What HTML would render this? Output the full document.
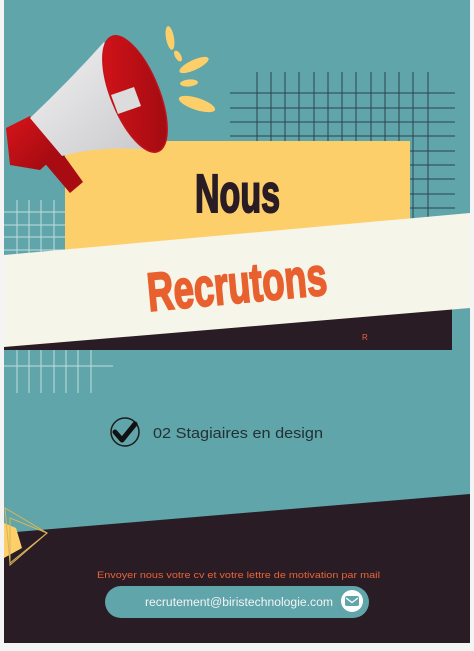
<!DOCTYPE html>
<html><head><meta charset="utf-8"><style>
html,body{margin:0;padding:0;background:#fff;width:474px;height:651px;overflow:hidden}
svg{display:block}
</style></head><body>
<svg width="474" height="651" viewBox="0 0 474 651" xmlns="http://www.w3.org/2000/svg">
<defs>
<clipPath id="card"><rect x="4" y="0" width="466" height="643"/></clipPath>
<linearGradient id="wh" x1="0" y1="0" x2="1" y2="1"><stop offset="0" stop-color="#f2f2f2"/><stop offset="1" stop-color="#c8c8cc"/></linearGradient>
<linearGradient id="rd" x1="0" y1="0" x2="1" y2="1"><stop offset="0" stop-color="#d8141a"/><stop offset="1" stop-color="#9a0a10"/></linearGradient>
</defs>
<rect x="0" y="0" width="474" height="651" fill="#f4f4f4"/>
<g clip-path="url(#card)">
<rect x="4" y="0" width="466" height="643" fill="#5fa5aa"/>
<g stroke="#263a44" stroke-width="1" opacity="0.9">
<line x1="257" y1="72" x2="257" y2="230"/><line x1="271" y1="72" x2="271" y2="230"/><line x1="285" y1="72" x2="285" y2="230"/><line x1="299" y1="72" x2="299" y2="230"/><line x1="314" y1="72" x2="314" y2="230"/><line x1="328" y1="72" x2="328" y2="230"/><line x1="342" y1="72" x2="342" y2="230"/><line x1="356" y1="72" x2="356" y2="230"/><line x1="371" y1="72" x2="371" y2="230"/><line x1="385" y1="72" x2="385" y2="230"/><line x1="399" y1="72" x2="399" y2="230"/><line x1="413" y1="72" x2="413" y2="230"/><line x1="428" y1="72" x2="428" y2="230"/>
<line x1="230" y1="93" x2="455" y2="93"/><line x1="230" y1="108" x2="455" y2="108"/><line x1="230" y1="122" x2="455" y2="122"/><line x1="230" y1="136" x2="455" y2="136"/><line x1="230" y1="151" x2="455" y2="151"/><line x1="230" y1="165" x2="455" y2="165"/><line x1="230" y1="179" x2="455" y2="179"/><line x1="230" y1="194" x2="455" y2="194"/><line x1="230" y1="208" x2="455" y2="208"/>
</g>
<g stroke="#d9ecec" stroke-width="1" opacity="0.8">
<line x1="17" y1="200" x2="17" y2="393"/><line x1="29" y1="200" x2="29" y2="393"/><line x1="41" y1="200" x2="41" y2="393"/><line x1="54" y1="200" x2="54" y2="393"/><line x1="66" y1="200" x2="66" y2="393"/><line x1="78" y1="200" x2="78" y2="393"/><line x1="91" y1="200" x2="91" y2="393"/>
<line x1="4" y1="212" x2="113" y2="212"/><line x1="4" y1="225" x2="113" y2="225"/><line x1="4" y1="237" x2="113" y2="237"/><line x1="4" y1="250" x2="113" y2="250"/><line x1="4" y1="348" x2="113" y2="348"/><line x1="4" y1="366" x2="113" y2="366"/>
</g>
<rect x="65" y="141" width="345" height="112" fill="#fdcf6a"/>
<rect x="4" y="295" width="448" height="55" fill="#291c24"/>
<text x="362" y="340" font-family="Liberation Sans, sans-serif" font-size="8" fill="#e8643a">R</text>
<polygon points="4,255 470,213 470,308 4,347" fill="#f6f5ea"/>
<text x="195" y="212" textLength="85" lengthAdjust="spacingAndGlyphs" font-family="'Liberation Sans Narrow','Liberation Sans',sans-serif" font-weight="bold" font-size="54" fill="#291c24" stroke="#291c24" stroke-width="2">Nous</text>
<text x="0" y="0" textLength="180" lengthAdjust="spacingAndGlyphs" transform="translate(149,311) rotate(-5.3)" font-family="'Liberation Sans Narrow','Liberation Sans',sans-serif" font-weight="bold" font-size="54" fill="#e8602d" stroke="#e8602d" stroke-width="2">Recrutons</text>
<!-- megaphone -->
<g>
<polygon points="6,128 30,116 60,152 40,170 10,165" fill="url(#rd)"/>
<polygon points="42,160 60,150 83,182 70,193" fill="#a80c12"/>
<path d="M30,118 Q70,80 104,42 L155,150 Q100,145 62,156 Z" fill="url(#wh)"/>
<ellipse cx="135" cy="94" rx="24" ry="62" transform="rotate(-22 135 94)" fill="url(#rd)" stroke="#c0141a" stroke-width="1.5"/>
<polygon points="111,95 134,87 141,106 118,114" fill="#dcdcdc"/>
</g>
<g fill="#fdcf6a">
<ellipse cx="170" cy="38" rx="4" ry="12" transform="rotate(-10 170 38)"/>
<ellipse cx="178" cy="56" rx="3" ry="6" transform="rotate(-30 178 56)"/>
<ellipse cx="194" cy="65" rx="16" ry="5" transform="rotate(-25 194 65)"/>
<ellipse cx="189" cy="83" rx="9" ry="3.5" transform="rotate(-5 189 83)"/>
<ellipse cx="197" cy="104" rx="19" ry="6" transform="rotate(18 197 104)"/>
</g>
<circle cx="125" cy="432" r="14" fill="none" stroke="#1c1c1c" stroke-width="1.5"/>
<path d="M115,432 L122,440 L135,424" fill="none" stroke="#111" stroke-width="5" stroke-linecap="round" stroke-linejoin="round"/>
<text x="153" y="438" textLength="170" lengthAdjust="spacingAndGlyphs" font-family="Liberation Sans, sans-serif" font-size="15" fill="#233036">02 Stagiaires en design</text>
<polygon points="4,533 470,494 470,651 4,651" fill="#291c24"/>
<polygon points="4,523 16,528 22,548 4,558" fill="#fdcf6a"/>
<g fill="none" stroke="#d9b45a" stroke-width="1">
<polygon points="5,508 47,533 10,563"/>
<polygon points="10,518 47,533 10,565"/>
</g>
<text x="97" y="578" textLength="283" lengthAdjust="spacingAndGlyphs" font-family="Liberation Sans, sans-serif" font-size="9.5" fill="#e8643a">Envoyer nous votre cv et votre lettre de motivation par mail</text>
<rect x="105" y="586" width="264" height="32" rx="16" fill="#5fa5aa"/>
<text x="145" y="606" textLength="188" lengthAdjust="spacingAndGlyphs" font-family="Liberation Sans, sans-serif" font-size="11.5" fill="#f4f4f4">recrutement@biristechnologie.com</text>
<circle cx="352" cy="601" r="11" fill="#fff"/>
<rect x="345" y="596" width="14" height="10" rx="2" fill="#5fa5aa"/>
<path d="M346,598 L352,602.5 L358,598" fill="none" stroke="#fff" stroke-width="1.3"/>
</g>
</svg>
</body></html>
